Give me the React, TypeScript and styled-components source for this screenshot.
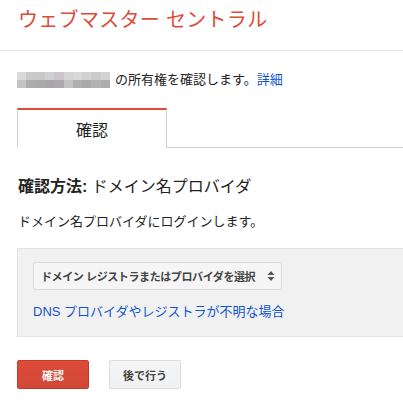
import React from "react";
import styled, { createGlobalStyle } from "styled-components";

const Global = createGlobalStyle`
  html, body { margin: 0; padding: 0; background: #fff; overflow: hidden; }
  body { font-family: "Liberation Sans", "Noto Sans CJK JP", sans-serif; color: #222; }
`;

const Page = styled.div`
  width: 403px;
  height: 409px;
  overflow: hidden;
`;

const Header = styled.header`
  height: 51px;
  border-bottom: 1px solid #e5e5e5;
  padding: 10px 0 0 18px;
  box-sizing: border-box;
`;

const Title = styled.h1`
  margin: 0;
  font-size: 20px;
  line-height: 20px;
  font-weight: normal;
  color: #dd4b39;
  letter-spacing: 0.3px;
`;

const Main = styled.main`
  padding-left: 17px;
`;

const OwnerRow = styled.div`
  display: flex;
  align-items: center;
  margin-top: 21px;
  height: 16px;
  font-size: 13px;
  line-height: 16px;
`;

const Blur = styled.div`
  display: grid;
  grid-template-columns: repeat(10, 1fr);
  grid-template-rows: 8px 8px;
  width: 93px;
  margin-right: 5px;
`;

const Cell = styled.span<{ $c: string }>`
  background: ${(p) => p.$c};
`;

const Link = styled.a`
  color: #1155cc;
  text-decoration: none;
`;

const Tabs = styled.div`
  display: flex;
  margin-top: 20px;
  border-bottom: 1px solid #cfcfcf;
`;

const Tab = styled.div<{ $active?: boolean }>`
  width: 148px;
  height: 37px;
  display: flex;
  align-items: center;
  justify-content: center;
  font-size: 16px;
  color: #222;
  background: #fff;
  border-top: 2px solid ${(p) => (p.$active ? "#dd4b39" : "transparent")};
  border-left: 1px solid #cfcfcf;
  border-right: 1px solid #cfcfcf;
  margin-bottom: -1px;
  padding-bottom: 1px;
`;

const Heading = styled.h2`
  margin: 29px 0 0 1px;
  font-size: 16px;
  line-height: 20px;
  font-weight: normal;
  color: #222;
`;

const Strong = styled.span`
  font-weight: bold;
`;

const Para = styled.p`
  margin: 17px 0 0 1px;
  font-size: 13px;
  line-height: 16px;
`;

const Panel = styled.div`
  margin-top: 18px;
  background: #f1f1f1;
  border: 1px solid #e3e3e3;
  border-right: none;
  padding: 13px 0 16px 15px;
  height: 89px;
  box-sizing: border-box;
`;

const SelectBox = styled.div`
  width: 249px;
  height: 28px;
  box-sizing: border-box;
  display: flex;
  align-items: center;
  justify-content: space-between;
  padding: 0 6px 0 7px;
  border: 1px solid #dcdcdc;
  border-radius: 2px;
  background: #f5f5f5;
  font-size: 11px;
  font-weight: bold;
  color: #444;
  letter-spacing: -0.4px;
`;

const Arrows = styled.svg`
  width: 8px;
  height: 12px;
  flex: none;
`;

const PanelLink = styled(Link)`
  display: block;
  margin-top: 14px;
  font-size: 13px;
  line-height: 16px;
`;

const Actions = styled.div`
  display: flex;
  gap: 20px;
  margin-top: 23px;
`;

const Button = styled.button<{ $primary?: boolean }>`
  width: 72px;
  height: 29px;
  border-radius: 2px;
  font-family: "Liberation Sans", "Noto Sans CJK JP", sans-serif;
  font-size: 11px;
  font-weight: bold;
  padding: 0;
  cursor: pointer;
  border: 1px solid ${(p) => (p.$primary ? "#c6392a" : "#dcdcdc")};
  color: ${(p) => (p.$primary ? "#fff" : "#444")};
  background: ${(p) =>
    p.$primary
      ? "linear-gradient(#dd4b39, #d14836)"
      : "linear-gradient(#f5f5f5, #f1f1f1)"};
`;

const top = ["#d9d9d9", "#cbc9c9", "#c9c9c9", "#d0d0d2", "#cbc4cb", "#d4d4d4", "#d8d8d8", "#d2d2d2", "#cbcbcb", "#d2d2d2"];
const bottom = ["#c4c4c4", "#adabab", "#a9a9a9", "#a7a7ab", "#ada8ad", "#c2c2c2", "#afafaf", "#aaaaaa", "#b2b2b2", "#abadad"];

export default function App() {
  return (
    <Page>
      <Global />
      <Header>
        <Title>ウェブマスター セントラル</Title>
      </Header>
      <Main>
        <OwnerRow>
          <Blur>
            {top.map((c, i) => (
              <Cell key={"t" + i} $c={c} />
            ))}
            {bottom.map((c, i) => (
              <Cell key={"b" + i} $c={c} />
            ))}
          </Blur>
          <span>
            の所有権を確認します。<Link href="#">詳細</Link>
          </span>
        </OwnerRow>
        <Tabs>
          <Tab $active>確認</Tab>
        </Tabs>
        <Heading>
          <Strong>確認方法:</Strong> ドメイン名プロバイダ
        </Heading>
        <Para>ドメイン名プロバイダにログインします。</Para>
        <Panel>
          <SelectBox>
            <span>ドメイン レジストラまたはプロバイダを選択</span>
            <Arrows viewBox="0 0 8 12">
              <path d="M4 1 L7.5 5 H0.5 Z" fill="#555" />
              <path d="M4 11 L7.5 7 H0.5 Z" fill="#555" />
            </Arrows>
          </SelectBox>
          <PanelLink href="#">DNS プロバイダやレジストラが不明な場合</PanelLink>
        </Panel>
        <Actions>
          <Button $primary>確認</Button>
          <Button>後で行う</Button>
        </Actions>
      </Main>
    </Page>
  );
}
